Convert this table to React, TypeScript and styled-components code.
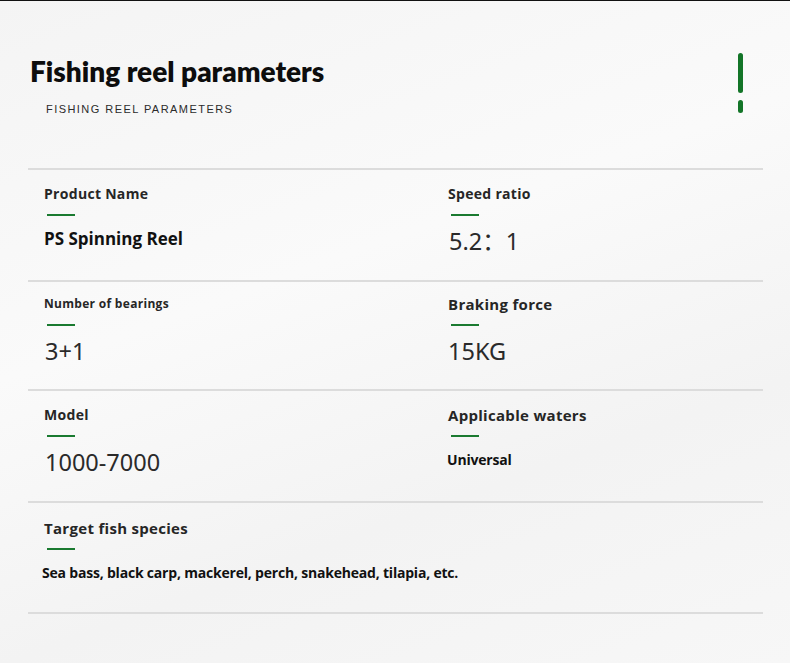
import React from "react";
import styled, { createGlobalStyle } from "styled-components";

const Global = createGlobalStyle`
  html, body { margin: 0; padding: 0; }
  body {
    width: 790px;
    height: 663px;
    overflow: hidden;
    background: #f6f6f6;
  }
`;

const Page = styled.div`
  box-sizing: border-box;
  width: 790px;
  height: 663px;
  border-top: 1px solid #111;
  background: linear-gradient(160deg, #f4f4f4 0%, #fafafa 40%, #f3f3f3 70%, #f7f7f7 100%);
  padding: 0 27px 0 28px;
  font-family: "Open Sans", "Noto Sans", sans-serif;
  color: #222;
`;

const Header = styled.header`
  display: flex;
  justify-content: space-between;
  align-items: flex-start;
  height: 167px;
  padding: 0 20px 0 2px;
`;

const Titles = styled.div`
  display: flex;
  flex-direction: column;
  padding-top: 51px;
`;

const Title = styled.h1`
  margin: 0;
  font-family: "Lato", "Open Sans", sans-serif;
  font-weight: 800;
  font-size: 28px;
  line-height: 38px;
  color: #0d0d0d;
`;

const Subtitle = styled.div`
  margin: 12px 0 0 16px;
  font-family: "Liberation Sans", Arial, sans-serif;
  font-size: 11px;
  line-height: 14px;
  letter-spacing: 1.45px;
  color: #2b2b2b;
`;

const Marker = styled.div`
  display: flex;
  flex-direction: column;
  align-items: center;
  gap: 7px;
  padding-top: 52px;
`;

const MarkerBar = styled.span<{ $h: number }>`
  display: block;
  width: 5px;
  height: ${(p) => p.$h}px;
  border-radius: 3px;
  background: #137528;
`;

const Table = styled.div`
  display: flex;
  flex-direction: column;
  border-bottom: 2px solid #dcdcdc;
`;

const Row = styled.div<{ $h: number; $pt: number }>`
  box-sizing: border-box;
  display: grid;
  grid-template-columns: 404px 1fr;
  height: ${(p) => p.$h}px;
  padding: ${(p) => p.$pt}px 0 0 16px;
  border-top: 2px solid #dcdcdc;
`;

const Cell = styled.div<{ $span?: boolean }>`
  display: flex;
  flex-direction: column;
  align-items: flex-start;
  grid-column: ${(p) => (p.$span ? "1 / -1" : "auto")};
`;

const Label = styled.div<{ $size: number }>`
  font-family: "Open Sans", sans-serif;
  font-weight: 700;
  font-size: ${(p) => p.$size}px;
  line-height: 20px;
  letter-spacing: 0.3px;
  color: #262626;
`;

const Accent = styled.span`
  display: block;
  width: 28px;
  height: 2px;
  margin: 10px 0 0 3px;
  background: #1a7a30;
`;

const Value = styled.div<{ $kind: "big" | "bold" | "small"; $shift?: number }>`
  margin-left: ${(p) => p.$shift ?? 0}px;
  color: ${(p) => (p.$kind === "big" ? "#2a2a2a" : "#111")};
  font-family: ${(p) =>
    p.$kind === "big"
      ? `"Noto Sans", "Noto Sans CJK SC", "Open Sans", sans-serif`
      : `"Open Sans", sans-serif`};
  font-weight: ${(p) => (p.$kind === "big" ? 400 : 700)};
  font-size: ${(p) => (p.$kind === "big" ? 23.5 : p.$kind === "bold" ? 17 : 14)}px;
  line-height: ${(p) => (p.$kind === "big" ? 28 : p.$kind === "bold" ? 22 : 20)}px;
  letter-spacing: ${(p) => (p.$kind === "small" ? -0.2 : 0)}px;
  margin-top: ${(p) => (p.$kind === "big" ? 11 : p.$kind === "bold" ? 12 : 13)}px;
`;

type Item = {
  label: string;
  labelSize: number;
  value: string;
  kind: "big" | "bold" | "small";
  shift?: number;
};

const rows: { h: number; pt: number; items: Item[] }[] = [
  {
    h: 112,
    pt: 14,
    items: [
      { label: "Product Name", labelSize: 14, value: "PS Spinning Reel", kind: "bold" },
      { label: "Speed ratio", labelSize: 14, value: "5.2：1", kind: "big", shift: 1 },
    ],
  },
  {
    h: 109,
    pt: 12,
    items: [
      { label: "Number of bearings", labelSize: 12, value: "3+1", kind: "big", shift: 1 },
      { label: "Braking force", labelSize: 15, value: "15KG", kind: "big" },
    ],
  },
  {
    h: 112,
    pt: 14,
    items: [
      { label: "Model", labelSize: 14, value: "1000-7000", kind: "big", shift: 1 },
      { label: "Applicable waters", labelSize: 15, value: "Universal", kind: "small", shift: -1 },
    ],
  },
];

export default function App() {
  return (
    <>
      <Global />
      <Page>
        <Header>
          <Titles>
            <Title>Fishing reel parameters</Title>
            <Subtitle>FISHING REEL PARAMETERS</Subtitle>
          </Titles>
          <Marker>
            <MarkerBar $h={40} />
            <MarkerBar $h={13} />
          </Marker>
        </Header>
        <Table>
          {rows.map((r, i) => (
            <Row key={i} $h={r.h} $pt={r.pt}>
              {r.items.map((it) => (
                <Cell key={it.label}>
                  <Label $size={it.labelSize}>{it.label}</Label>
                  <Accent />
                  <Value $kind={it.kind} $shift={it.shift}>
                    {it.value}
                  </Value>
                </Cell>
              ))}
            </Row>
          ))}
          <Row $h={111} $pt={15}>
            <Cell $span>
              <Label $size={15}>Target fish species</Label>
              <Accent />
              <Value $kind="small" $shift={-2}>
                Sea bass, black carp, mackerel, perch, snakehead, tilapia, etc.
              </Value>
            </Cell>
          </Row>
        </Table>
      </Page>
    </>
  );
}
